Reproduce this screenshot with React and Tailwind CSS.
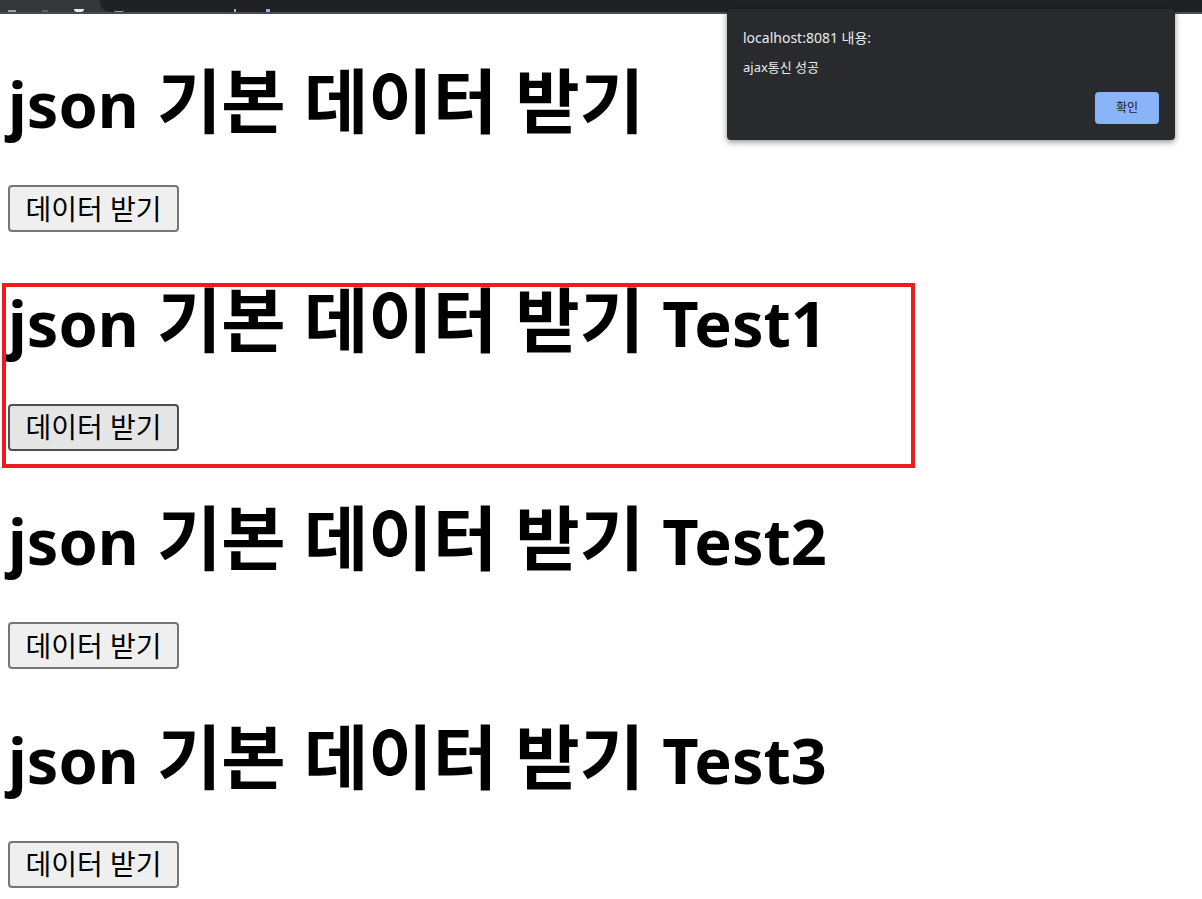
import { useState } from "react";

const font = { fontFamily: '"Noto Sans", "Noto Sans CJK KR", sans-serif' };

function Section({ suffix, hover, first }) {
  return (
    <section className={first ? "" : "mt-[54.5px]"}>
      <h1 className="h-[74px] text-[63px] leading-[66px] font-bold text-black whitespace-nowrap">
        json<span className="text-[70px]"> 기본 데이터 받기 </span>
        {suffix}
      </h1>
      <button
        className={`mt-[43px] w-[171px] h-[47px] rounded-[4px] border-2 text-[28px] leading-none text-black flex items-center justify-center ${
          hover ? "bg-[#e5e5e5] border-[#4f4f4f]" : "bg-[#efefef] border-[#767676]"
        }`}
      >
        데이터 받기
      </button>
    </section>
  );
}

export default function App() {
  const [done, setDone] = useState(false);

  return (
    <div className="relative w-[1202px] h-[899px] overflow-hidden bg-white" style={font}>
      {/* 브라우저 상단 */}
      <div className="h-[12px] bg-[#35363a] flex border-b-2 border-[#4a4b4f] box-content">
        <div className="w-[100px] flex items-end gap-[26px] pl-[8px]">
          <span className="w-[8px] h-[2px] bg-[#9aa0a6]" />
          <span className="w-[6px] h-[2px] bg-[#5f6368]" />
          <span className="w-[10px] h-[3px] rounded-b-full bg-[#e8eaed]" />
        </div>
        <div className="flex-1 bg-[#202124] rounded-bl-[10px] flex items-end pl-[14px]">
          <span className="w-[10px] h-[2px] rounded-b-full border-b border-[#9aa0a6]" />
          <span className="ml-[110px] w-[2px] h-[3px] bg-[#8ab4f8]" />
          <span className="ml-[30px] w-[4px] h-[3px] bg-[#8ab4f8]" />
        </div>
      </div>

      {/* 본문 */}
      <main className="px-[8px] pt-[54px]">
        <Section suffix="" first />
        <Section suffix="Test1" hover />
        <Section suffix="Test2" />
        <Section suffix="Test3" />
      </main>

      {/* 표시한 영역 */}
      <div className="absolute left-[2px] top-[283px] w-[913px] h-[185px] border-4 border-[#ed1c24] pointer-events-none" />

      {/* alert 창 */}
      {!done && (
        <div className="absolute left-[727px] top-[9px] w-[448px] h-[131px] bg-[#292a2d] rounded-[4px] shadow-[0_2px_6px_rgba(0,0,0,0.45)] px-[16px] pt-[19px]">
          <p className="text-[14px] leading-[20px] text-[#e8eaed]">localhost:8081 내용:</p>
          <p className="mt-[10px] text-[13px] leading-[18px] text-[#e8eaed]">ajax통신 성공</p>
          <div className="flex justify-end mt-[16px]">
            <button
              onClick={() => setDone(true)}
              className="w-[64px] h-[32px] rounded-[4px] bg-[#8ab4f8] text-[12px] text-[#202124]"
            >
              확인
            </button>
          </div>
        </div>
      )}
    </div>
  );
}
